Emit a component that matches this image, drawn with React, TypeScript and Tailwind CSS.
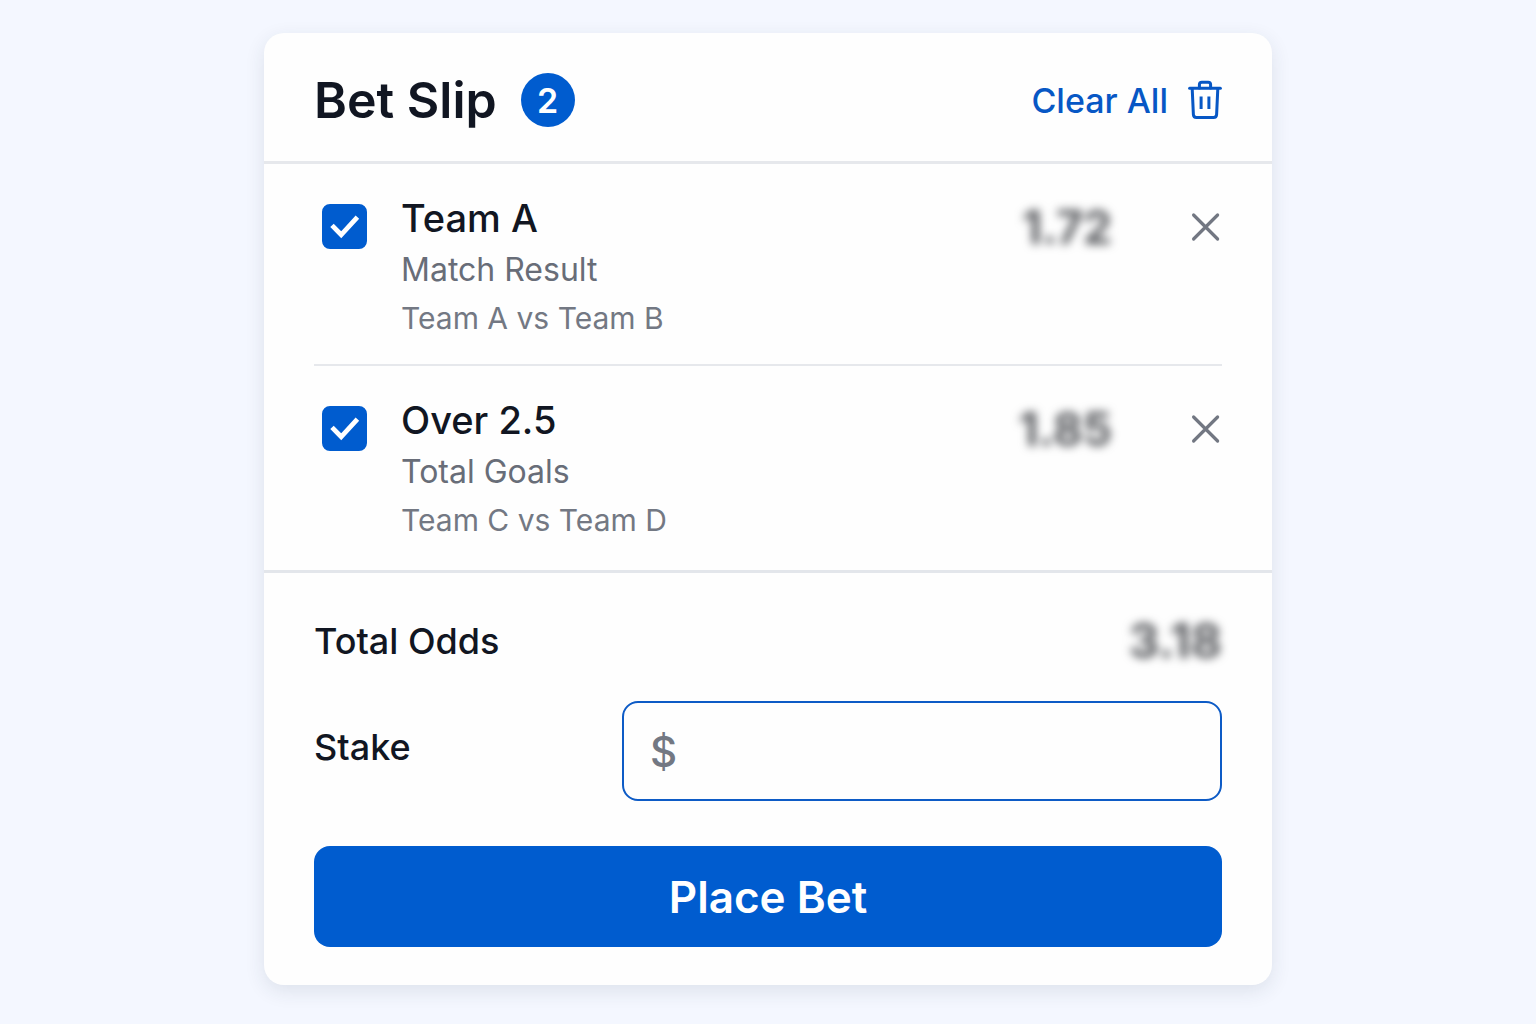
import { useState } from "react";

type Selection = {
  id: number;
  pick: string;
  market: string;
  match: string;
  odds: number;
  checked: boolean;
};

const initialSelections: Selection[] = [
  { id: 1, pick: "Team A", market: "Match Result", match: "Team A vs Team B", odds: 1.72, checked: true },
  { id: 2, pick: "Over 2.5", market: "Total Goals", match: "Team C vs Team D", odds: 1.85, checked: true },
];

function TrashIcon() {
  return (
    <svg
      className="h-10 w-[34px]"
      viewBox="0 0 34 40"
      fill="none"
      stroke="currentColor"
      strokeWidth={3}
      strokeLinecap="round"
      strokeLinejoin="round"
      aria-hidden="true"
    >
      <path d="M1.6 8.2h30.8" />
      <path d="M11.4 8V4.6a2.4 2.4 0 0 1 2.4-2.4h6.4a2.4 2.4 0 0 1 2.4 2.4V8" />
      <path d="M4.2 8.6l1.2 26a3 3 0 0 0 3 2.8h17.2a3 3 0 0 0 3-2.8l1.2-26" />
      <path d="M13.1 16.6v12.4M20.9 16.6v12.4" strokeLinecap="butt" />
    </svg>
  );
}

function CloseIcon() {
  return (
    <svg
      className="h-8 w-8"
      viewBox="0 0 32 32"
      fill="none"
      stroke="currentColor"
      strokeWidth={3.2}
      strokeLinecap="round"
      aria-hidden="true"
    >
      <path d="M3.6 4l24 24M27.6 4l-24 24" />
    </svg>
  );
}

export default function App() {
  const [selections, setSelections] = useState(initialSelections);
  const [stake, setStake] = useState("");

  const active = selections.filter((s) => s.checked);
  const totalOdds = active.reduce((total, s) => total * s.odds, 1);

  const toggle = (id: number) =>
    setSelections(selections.map((s) => (s.id === id ? { ...s, checked: !s.checked } : s)));

  const remove = (id: number) => setSelections(selections.filter((s) => s.id !== id));

  return (
    <main className="min-h-screen bg-[#f4f7ff] px-4 py-[33px] font-['Inter',sans-serif] text-[#111622]">
      <section className="mx-auto max-w-[1008px] rounded-[20px] bg-[#fefefe] shadow-[0_6px_20px_rgba(40,55,75,0.11)]">
        {/* Header */}
        <header className="flex h-[131px] items-center justify-between border-b-[3px] border-[#e6e8ec] px-[50px] pt-1.5">
          <div className="flex items-center gap-6">
            <h1 className="text-[50px] leading-[56px] font-semibold">Bet Slip</h1>
            <span className="flex size-[54px] items-center justify-center rounded-full bg-[#005ccf] text-[34px] font-semibold text-white">
              {selections.length}
            </span>
          </div>
          <button
            type="button"
            onClick={() => setSelections([])}
            className="flex items-center gap-5 text-[34px] font-medium text-[#0757c5]"
          >
            Clear All
            <TrashIcon />
          </button>
        </header>

        {/* Selections */}
        <ul className="px-[50px]">
          {selections.map((s) => (
            <li
              key={s.id}
              className="flex items-start border-b-2 border-[#e6e8ec] pt-[26px] pb-[22px] last:border-b-0 last:pb-[26px]"
            >
              <div className="flex h-[72px] w-[87px] items-center pl-2">
                <div className="grid size-[45px] place-items-center">
                  <input
                    id={`pick-${s.id}`}
                    type="checkbox"
                    checked={s.checked}
                    onChange={() => toggle(s.id)}
                    className="peer col-start-1 row-start-1 size-[45px] appearance-none rounded-lg border-2 border-[#005ccf] checked:bg-[#005ccf]"
                  />
                  <svg
                    className="pointer-events-none invisible col-start-1 row-start-1 size-[45px] text-white peer-checked:visible"
                    viewBox="0 0 45 45"
                    fill="none"
                    stroke="currentColor"
                    strokeWidth={4.8}
                    aria-hidden="true"
                  >
                    <path d="M10 21.4l9.2 9.4L35.4 13.2" />
                  </svg>
                </div>
              </div>

              <div className="flex-1">
                <label htmlFor={`pick-${s.id}`} className="block text-[38px] leading-[56px] font-medium">
                  {s.pick}
                </label>
                <p className="text-[32px] leading-[48px] text-[#686d78]">{s.market}</p>
                <p className="text-[30px] leading-[48px] text-[#737883]">{s.match}</p>
              </div>

              <div className="flex h-[74px] items-center gap-[78px]">
                <span className="text-[46px] font-bold text-[#55575b] blur-[5px]">{s.odds.toFixed(2)}</span>
                <button
                  type="button"
                  aria-label={`Remove ${s.pick}`}
                  onClick={() => remove(s.id)}
                  className="text-[#727782]"
                >
                  <CloseIcon />
                </button>
              </div>
            </li>
          ))}
        </ul>

        {/* Summary */}
        <div className="border-t-[3px] border-[#e3e6eb] px-[50px] pt-10 pb-[38px]">
          <div className="flex h-14 items-center justify-between text-4xl font-medium">
            <span>Total Odds</span>
            <span className="text-[48px] font-bold text-[#55575b] blur-[5px]">{totalOdds.toFixed(2)}</span>
          </div>

          <div className="mt-8 flex items-center justify-between">
            <label htmlFor="stake" className="pb-2 text-4xl font-medium">
              Stake
            </label>
            <div className="flex h-[100px] w-[600px] items-center gap-3 rounded-2xl border-2 border-[#0d5bc6] px-[26px] text-[42px]">
              <span className="font-medium text-[#737883]">$</span>
              <input
                id="stake"
                type="text"
                inputMode="decimal"
                value={stake}
                onChange={(e) => setStake(e.target.value)}
                className="min-w-0 flex-1 bg-transparent outline-none"
              />
            </div>
          </div>

          <button
            type="button"
            className="mt-[45px] h-[101px] w-full rounded-2xl bg-[#005ccf] text-[44px] font-semibold text-white"
          >
            Place Bet
          </button>
        </div>
      </section>
    </main>
  );
}
